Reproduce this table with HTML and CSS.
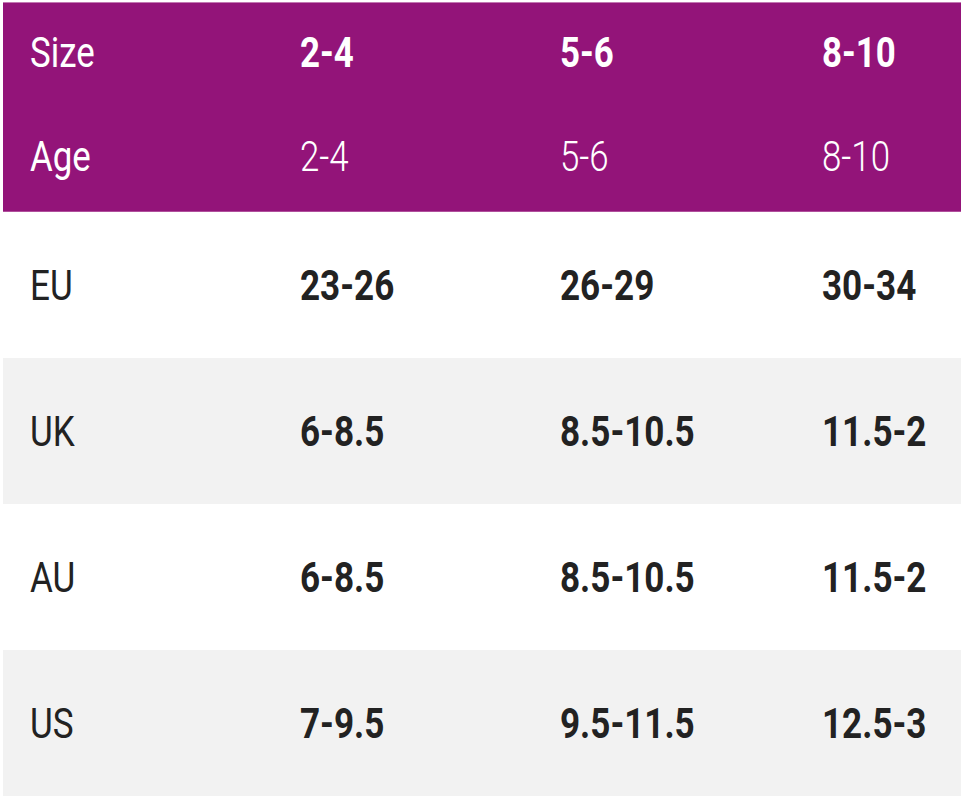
FILE: index.html
```html
<!DOCTYPE html>
<html lang="en">
<head>
<meta charset="utf-8">
<title>Size chart</title>
<link rel="stylesheet" href="styles.css">
</head>
<body>
<div class="chart">
  <div class="head">
    <div class="row head-row">
      <div class="cell label"><span class="t">Size</span></div>
      <div class="cell strong"><span class="t">2-4</span></div>
      <div class="cell strong"><span class="t">5-6</span></div>
      <div class="cell strong"><span class="t">8-10</span></div>
    </div>
    <div class="row head-row">
      <div class="cell label"><span class="t">Age</span></div>
      <div class="cell light"><span class="t">2-4</span></div>
      <div class="cell light"><span class="t">5-6</span></div>
      <div class="cell light"><span class="t">8-10</span></div>
    </div>
  </div>
  <div class="row body-row">
    <div class="cell label"><span class="t">EU</span></div>
    <div class="cell val"><span class="t">23-26</span></div>
    <div class="cell val"><span class="t">26-29</span></div>
    <div class="cell val"><span class="t">30-34</span></div>
  </div>
  <div class="row body-row alt">
    <div class="cell label"><span class="t">UK</span></div>
    <div class="cell val"><span class="t">6-8.5</span></div>
    <div class="cell val"><span class="t">8.5-10.5</span></div>
    <div class="cell val"><span class="t">11.5-2</span></div>
  </div>
  <div class="row body-row">
    <div class="cell label"><span class="t">AU</span></div>
    <div class="cell val"><span class="t">6-8.5</span></div>
    <div class="cell val"><span class="t">8.5-10.5</span></div>
    <div class="cell val"><span class="t">11.5-2</span></div>
  </div>
  <div class="row body-row alt">
    <div class="cell label"><span class="t">US</span></div>
    <div class="cell val"><span class="t">7-9.5</span></div>
    <div class="cell val"><span class="t">9.5-11.5</span></div>
    <div class="cell val"><span class="t">12.5-3</span></div>
  </div>
</div>
</body>
</html>
```

FILE: styles.css
```css
html, body {
  margin: 0;
  padding: 0;
  background: #ffffff;
}

body {
  font-family: Roboto, "Noto Sans", "Liberation Sans", sans-serif;
}

.chart {
  margin: 2px 3px 0 3px;
  width: 958px;
}

.row {
  display: grid;
  grid-template-columns: 270px 260px 262px 1fr;
  align-items: center;
}

.cell {
  padding-left: 27px;
  white-space: nowrap;
}

.t {
  display: inline-block;
  transform-origin: left center;
}

.head {
  background: #931479;
  border-top: 1px solid #c278b2;
  border-bottom: 1px solid #b04f9c;
  color: #ffffff;
}

.head-row {
  box-sizing: border-box;
  height: 104px;
  padding-bottom: 6px;
  font-size: 42px;
}

.head-row .t {
  transform: scaleX(0.83);
}

.head-row .label {
  font-weight: 400;
}

.head-row .strong {
  font-weight: 700;
}

.head-row .light {
  font-weight: 300;
}

.body-row {
  height: 146px;
  color: #222222;
  font-size: 43px;
}

.body-row .t {
  transform: scaleX(0.815);
}

.body-row .label {
  font-weight: 400;
}

.body-row .val {
  font-weight: 700;
}

.alt {
  background: #f2f2f2;
}
```
